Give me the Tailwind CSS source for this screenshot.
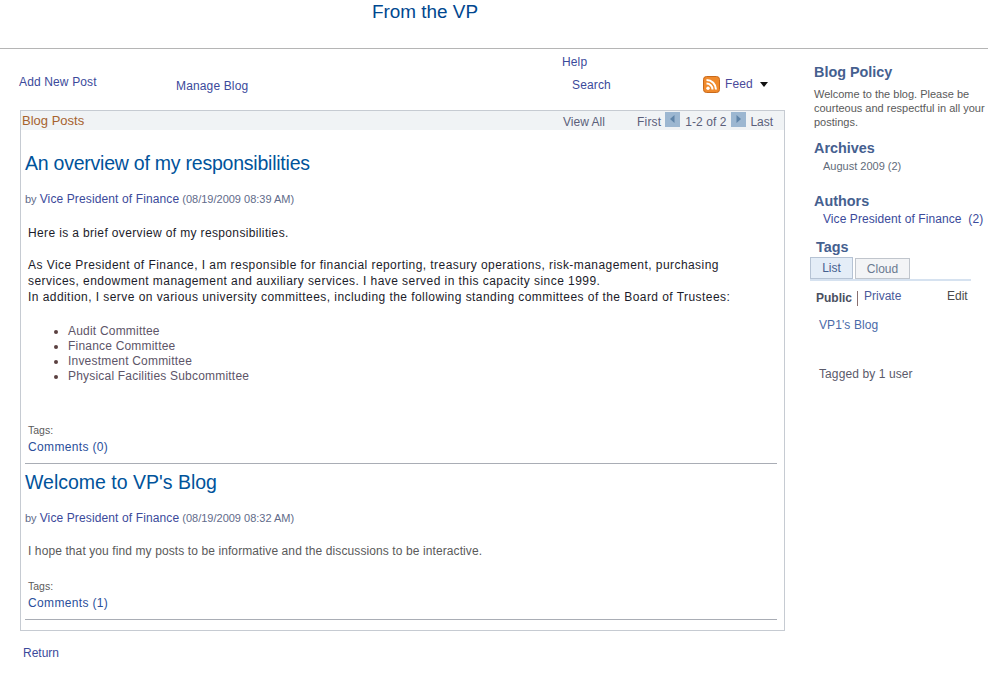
<!DOCTYPE html>
<html lang="en">
<head>
  <meta charset="UTF-8" />
  <title>From the VP</title>
  <script src="https://cdn.jsdelivr.net/npm/@tailwindcss/browser@4"></script>
</head>
<body class="bg-white font-['Liberation_Sans',Arial,sans-serif] text-[12px] text-[#5a5a5a] overflow-hidden">
  <div class="h-[49px] border-b border-[#b5b5b5] pl-[372px] pt-[1px]">
    <h1 class="text-[18.9px] leading-[22px] text-[#00478f]">From the VP</h1>
  </div>

  <div class="flex">
    <div class="w-[810px] shrink-0">
      <!-- toolbar -->
      <div class="flex h-[61px] text-[#3b4a9b] tracking-[0.14px]">
        <a class="ml-[19px] mt-[25px] w-[157px] h-[16px] leading-[16px]">Add New Post</a>
        <a class="mt-[29px] w-[386px] h-[16px] leading-[16px]">Manage Blog</a>
        <div class="w-[141px]">
          <a class="block mt-[5px] h-[16px] leading-[16px]">Help</a>
          <a class="block mt-[7px] ml-[10px] h-[16px] leading-[16px]">Search</a>
        </div>
        <div class="flex items-center h-[18px] mt-[26px]">
          <svg width="17" height="17" viewBox="0 0 17 17" class="mr-[5px]">
            <rect x="0.5" y="0.5" width="16" height="16" rx="3" fill="#f08a2c" stroke="#c8691a"/>
            <circle cx="5" cy="12.2" r="1.7" fill="#fff"/>
            <path d="M3.5 7.5a6 6 0 0 1 6 6M3.5 4a9.5 9.5 0 0 1 9.5 9.5" fill="none" stroke="#fff" stroke-width="2"/>
          </svg>
          <span class="text-[#4a4a9a]">Feed</span>
          <svg width="8" height="5" viewBox="0 0 8 5" class="ml-[7px]"><path d="M0 0h8L4 5z" fill="#111"/></svg>
        </div>
      </div>

      <!-- posts panel -->
      <div class="ml-[20px] w-[765px] h-[521px] border border-[#c6cbd2]">
        <div class="flex items-center h-[19px] bg-[#f0f3f5] text-[#5b5f7a]">
          <span class="ml-[1px] w-[541px] text-[13px] text-[#a6622e]">Blog Posts</span>
          <a class="w-[74px] mt-[3px]">View All</a>
          <a class="mt-[3px] tracking-[0.2px]">First</a>
          <svg width="15" height="15" viewBox="0 0 15 15" class="ml-[4px] mr-[5px] -mt-[3px]"><rect width="15" height="15" fill="#9cb7d1"/><path d="M9.5 3v8L5 7z" fill="#5f84a8"/></svg>
          <span class="mt-[3px] tracking-[0.05px]">1-2 of 2</span>
          <svg width="15" height="15" viewBox="0 0 15 15" class="ml-[5px] mr-[4px] -mt-[3px]"><rect width="15" height="15" fill="#9cb7d1"/><path d="M5.5 3v8L10 7z" fill="#5f84a8"/></svg>
          <a class="mt-[3px]">Last</a>
        </div>

        <div class="pl-[4px] pr-[7px]">
          <h2 class="mt-[21px] text-[19.5px] leading-[24px] text-[#00539b] tracking-[-0.23px]">An overview of my responsibilities</h2>
          <p class="mt-[16px] h-[16px] leading-[16px] text-[11px] text-[#5f6b8a]">by <a class="text-[12px] text-[#3b4a9b] tracking-[0.12px]">Vice President of Finance</a> (08/19/2009 08:39 AM)</p>
          <div class="pl-[3px] text-[12px] leading-[16px] text-[#1c1c2a] tracking-[0.44px]">
            <p class="mt-[18px] tracking-[0.36px]">Here is a brief overview of my responsibilities.</p>
            <p class="mt-[16px] w-[720px]">As Vice President of Finance, I am responsible for financial reporting, treasury operations, risk-management, purchasing services, endowment management and auxiliary services. I have served in this capacity since 1999.</p>
            <p class="whitespace-nowrap">In addition, I serve on various university committees, including the following standing committees of the Board of Trustees:</p>
          </div>
          <ul class="mt-[19px] ml-[43px] list-disc list-outside leading-[15px] text-[#5d5568] marker:text-[#5a4040] tracking-[0.2px]">
            <li>Audit Committee</li>
            <li>Finance Committee</li>
            <li>Investment Committee</li>
            <li>Physical Facilities Subcommittee</li>
          </ul>
          <p class="mt-[39px] h-[14px] leading-[14px] pl-[3px] text-[10.5px] text-[#5a5a5a]">Tags:</p>
          <a class="block mt-[2px] h-[16px] leading-[16px] pl-[3px] text-[#2a4f9b] tracking-[0.35px]">Comments (0)</a>
          <div class="mt-[8px] border-t border-[#a9adb5]"></div>

          <h2 class="mt-[6px] text-[19.5px] leading-[24px] text-[#00539b]">Welcome to VP's Blog</h2>
          <p class="mt-[16px] h-[16px] leading-[16px] text-[11px] text-[#5f6b8a]">by <a class="text-[12px] text-[#3b4a9b] tracking-[0.12px]">Vice President of Finance</a> (08/19/2009 08:32 AM)</p>
          <p class="mt-[17px] leading-[16px] pl-[3px] text-[#5a5a5a] tracking-[0.1px]">I hope that you find my posts to be informative and the discussions to be interactive.</p>
          <p class="mt-[20px] h-[14px] leading-[14px] pl-[3px] text-[10.5px] text-[#5a5a5a]">Tags:</p>
          <a class="block mt-[2px] h-[16px] leading-[16px] pl-[3px] text-[#2a4f9b] tracking-[0.35px]">Comments (1)</a>
          <div class="mt-[8px] border-t border-[#a9adb5]"></div>
        </div>
      </div>

      <a class="block ml-[23px] mt-[14px] leading-[16px] text-[#3b4a9b]">Return</a>
    </div>

    <!-- sidebar -->
    <aside class="w-[178px] shrink-0">
      <h3 class="ml-[4px] mt-[14px] text-[14.4px] leading-[18px] font-bold text-[#45608f]">Blog Policy</h3>
      <p class="ml-[4px] mt-[6px] text-[11px] leading-[14px] text-[#5a5a5a] whitespace-nowrap">Welcome to the blog. Please be<br>courteous and respectful in all your<br>postings.</p>
      <h3 class="ml-[4px] mt-[10px] text-[14.4px] leading-[18px] font-bold text-[#45608f]">Archives</h3>
      <p class="ml-[13px] mt-[1px] text-[11px] leading-[16px] text-[#5f6b7a]">August 2009 (2)</p>
      <h3 class="ml-[4px] mt-[18px] text-[14.4px] leading-[18px] font-bold text-[#45608f]">Authors</h3>
      <p class="ml-[13px] mt-[1px] leading-[16px] text-[#3b4a9b] whitespace-nowrap tracking-[0.08px]">Vice President of Finance&nbsp; (2)</p>
      <h3 class="ml-[6px] mt-[11px] text-[14.4px] leading-[18px] font-bold text-[#45608f]">Tags</h3>
      <div class="flex items-end w-[161px] h-[25px] border-b-[2px] border-[#d6e2f0]">
        <span class="flex items-center justify-center w-[43px] h-[22px] border border-[#b6c3d4] bg-[#e4edf7] text-[#45608f]">List</span>
        <span class="flex items-center justify-center ml-[2px] w-[55px] h-[21px] border border-[#c0c5cc] bg-[#f3f4f6] text-[#6a7a90]">Cloud</span>
      </div>
      <div class="flex mt-[7px]">
        <span class="ml-[6px] mt-[2px] font-bold text-[#4a5060] leading-[16px]">Public</span>
        <span class="ml-[5px] mt-[3px] h-[15px] border-l border-[#8a7070]"></span>
        <a class="ml-[6px] w-[83px] leading-[16px] text-[#4a5a9a]">Private</a>
        <a class="leading-[16px] text-[#4a4a4a]">Edit</a>
      </div>
      <a class="block ml-[9px] mt-[11px] leading-[16px] text-[#4a6aa8] tracking-[0.1px]">VP1's Blog</a>
      <p class="ml-[9px] mt-[33px] leading-[16px] text-[#5a5a6a] tracking-[0.1px]">Tagged by 1 user</p>
    </aside>
  </div>
</body>
</html>
